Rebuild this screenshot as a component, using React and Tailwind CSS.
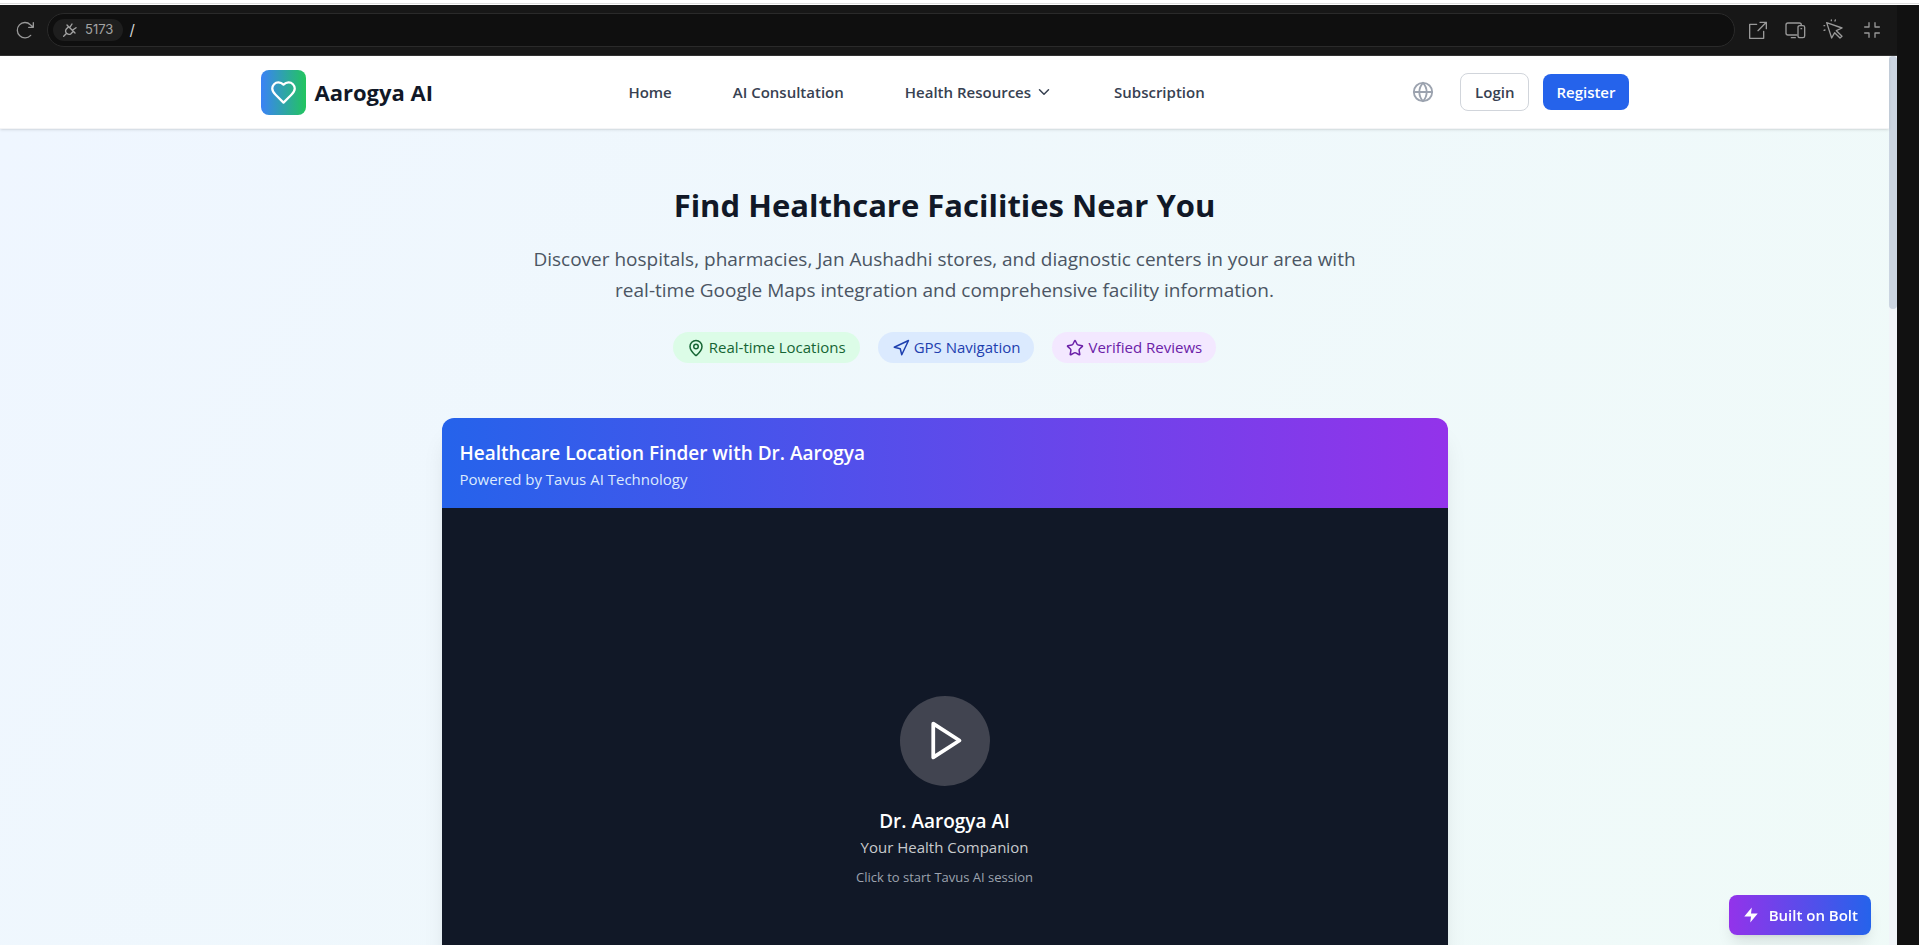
import { ChevronDown, Globe, MapPin, Navigation, Star } from 'lucide-react';

const badges = [
  { label: 'Real-time Locations', icon: MapPin, color: 'bg-[#dcfce7] text-[#166534]' },
  { label: 'GPS Navigation', icon: Navigation, color: 'bg-[#dbeafe] text-[#1e40af]' },
  { label: 'Verified Reviews', icon: Star, color: 'bg-[#f3e8ff] text-[#6b21a8]' },
];

function ToolbarButton({ label, children }) {
  return (
    <button type="button" aria-label={label} className="shrink-0 text-[#999999] hover:text-white">
      <svg
        viewBox="0 0 72 72"
        className="size-6"
        fill="none"
        stroke="currentColor"
        strokeWidth="4"
        strokeLinecap="round"
        strokeLinejoin="round"
      >
        {children}
      </svg>
    </button>
  );
}

function Toolbar() {
  return (
    <div className="flex h-[51px] shrink-0 items-center border-b border-[#333333] bg-[#171717] pr-[13px] pl-[13px]">
      <ToolbarButton label="Reload">
        <path d="M60 27L52 20A23 23 0 1 0 53 52M61 14V28H47" />
      </ToolbarButton>
      <div className="ml-[10px] flex h-[34px] flex-1 items-center gap-[6px] rounded-full border border-[#2a2a2a] bg-[#0f0f0f] pl-[5px]">
        <button
          type="button"
          className="flex h-[22px] items-center gap-2 rounded-full bg-[#1e1e1e] px-[10px] font-[Inter,sans-serif] text-[13px] text-[#a3a3a3]"
        >
          <svg
            viewBox="0 0 42 42"
            className="size-[14px]"
            fill="none"
            stroke="currentColor"
            strokeWidth="4"
            strokeLinecap="round"
            strokeLinejoin="round"
          >
            <path d="M2 40L11 31M14 8L34 28M17 11L10 18Q5 24 11 31Q18 37 24 32L31 25M20 14L27 3M28 22L39 14M14 8L12 6M34 28L36 30" />
          </svg>
          5173
        </button>
        <input
          type="text"
          aria-label="Path"
          defaultValue="/"
          className="min-w-0 flex-1 bg-transparent font-[Inter,sans-serif] text-[15px] text-[#d4d4d4] outline-none"
        />
      </div>
      <div className="ml-[11px] flex gap-[14px]">
        <ToolbarButton label="Open in new tab">
          <path d="M32 19H11V61H53V40M36 38L61 13M42 13H61V32" />
        </ToolbarButton>
        <ToolbarButton label="Device preview">
          <path d="M38 51H12Q6 51 6 45V21Q6 15 12 15H46Q52 15 52 21M22 59H34M48 23H57Q62 23 62 28V54Q62 59 57 59H48Q42 59 42 54V28Q42 23 48 23ZM51 32H53" />
        </ToolbarButton>
        <ToolbarButton label="Select element">
          <path d="M14 14L60 30L43 38L60 55L54 60L38 44L29 60ZM28 6V8M40 6L39 9M6 23H8M6 37L9 36" />
        </ToolbarButton>
        <ToolbarButton label="Exit full screen">
          <path d="M27 14V27H14M45 14V27H58M27 58V45H14M45 58V45H58" />
        </ToolbarButton>
      </div>
    </div>
  );
}

function Header() {
  return (
    <header className="relative h-[73px] shrink-0 border-b border-[#f3f4f6] bg-white shadow-sm">
      <div className="mx-auto flex h-full max-w-[1440px] items-center justify-between px-9">
        <a href="#home" className="flex items-center gap-[9px]">
          <span className="flex size-[45px] items-center justify-center rounded-lg bg-linear-to-r/srgb from-[#3b82f6] to-[#22c55e]">
            <svg
              viewBox="0 0 24 24"
              className="size-[27px] text-white"
              fill="none"
              stroke="currentColor"
              strokeWidth="2"
              strokeLinecap="round"
              strokeLinejoin="round"
            >
              <path d="M19 14c1.49-1.46 3-3.21 3-5.5A5.5 5.5 0 0 0 16.5 3c-1.76 0-3 .5-4.5 2-1.5-1.5-2.74-2-4.5-2A5.5 5.5 0 0 0 2 8.5c0 2.3 1.5 4.05 3 5.5l7 7Z" />
            </svg>
          </span>
          <span className="text-[22px] font-bold text-[#111827]">Aarogya AI</span>
        </a>

        <nav className="flex items-center gap-[61px] text-[15px] font-semibold text-[#374151]">
          <a href="#home">Home</a>
          <a href="#consultation">AI Consultation</a>
          <button type="button" className="flex items-center gap-1">
            Health Resources
            <ChevronDown className="size-[18px]" />
          </button>
          <a href="#subscription">Subscription</a>
        </nav>

        <div className="flex items-center gap-[14px] text-[15px] font-semibold">
          <button type="button" aria-label="Language" className="px-3 text-[#9ca3af]">
            <Globe className="size-[22px]" />
          </button>
          <button type="button" className="h-[38px] rounded-lg border border-[#d1d5db] px-[14px] text-[#374151]">
            Login
          </button>
          <button type="button" className="h-9 rounded-lg bg-[#2563eb] px-[13px] text-white">
            Register
          </button>
        </div>
      </div>
    </header>
  );
}

function Hero() {
  return (
    <section className="flex flex-col items-center text-center">
      <h1 className="text-[31px] leading-[40px] font-bold text-[#111827]">Find Healthcare Facilities Near You</h1>
      <p className="mt-[19px] max-w-[864px] text-[19px] leading-[31px] text-[#4b5563]">
        Discover hospitals, pharmacies, Jan Aushadhi stores, and diagnostic centers in your area with real-time Google
        Maps integration and comprehensive facility information.
      </p>
      <ul className="mt-[26px] flex gap-[18px]">
        {badges.map(({ label, icon: Icon, color }) => (
          <li key={label} className={`flex h-[31px] items-center gap-1 rounded-full px-[14px] text-[15px] ${color}`}>
            <Icon className="size-[18px]" />
            {label}
          </li>
        ))}
      </ul>
    </section>
  );
}

function VideoCard() {
  return (
    <section className="mx-auto mt-[55px] max-w-[1006px] overflow-hidden rounded-xl bg-white shadow-xl">
      <div className="h-[90px] bg-linear-to-r/srgb from-[#2563eb] to-[#9333ea] px-[18px] pt-[21px] text-white">
        <h2 className="text-[19px] leading-[28px] font-semibold">Healthcare Location Finder with Dr. Aarogya</h2>
        <p className="text-[15px] leading-[24px] text-[#dbeafe]">Powered by Tavus AI Technology</p>
      </div>
      <div className="flex aspect-video flex-col items-center justify-center bg-[#111827] text-white">
        <button
          type="button"
          aria-label="Start session"
          className="flex size-[90px] items-center justify-center rounded-full bg-[#414450]"
        >
          <svg
            viewBox="0 0 24 24"
            className="size-[45px]"
            fill="none"
            stroke="currentColor"
            strokeWidth="2"
            strokeLinecap="round"
            strokeLinejoin="round"
          >
            <path d="M6 3L20 12L6 21Z" />
          </svg>
        </button>
        <h3 className="mt-5 text-[19px] leading-[30px] font-semibold">Dr. Aarogya AI</h3>
        <p className="text-[15px] leading-[22px] text-[#c8cacd]">Your Health Companion</p>
        <p className="mt-[10px] text-[13px] leading-[18px] text-[#9ca3af]">Click to start Tavus AI session</p>
      </div>
    </section>
  );
}

export default function App() {
  return (
    <div className="flex h-screen flex-col overflow-hidden bg-white font-['Open_Sans',sans-serif]">
      <div className="mt-[3px] mb-px h-px shrink-0 bg-[#dedede]" />
      <div className="flex min-h-0 flex-1 bg-[#111111]">
        <div className="flex min-w-0 flex-1 flex-col">
          <Toolbar />
          <div className="flex min-h-0 flex-1">
            <div className="flex min-w-0 flex-1 flex-col bg-white">
              <Header />
              <main className="min-h-0 flex-1 overflow-hidden bg-linear-to-br/srgb from-[#eff6ff] to-[#f0fdf4] bg-[length:100%_3052px] bg-no-repeat pt-[56px]">
                <Hero />
                <VideoCard />
              </main>
            </div>
            <div className="w-2 shrink-0 bg-[#f1f5f9]">
              <div className="h-[253px] rounded bg-[#cbd5e1]" />
            </div>
          </div>
        </div>
        <div className="w-[22px] shrink-0" />
      </div>
      <a
        href="#bolt"
        className="fixed right-12 bottom-[10px] flex h-10 items-center gap-[9px] rounded-lg bg-linear-to-r/srgb from-[#9333ea] to-[#2563eb] px-[13px] text-[15px] font-semibold text-white shadow-lg"
      >
        <svg viewBox="0 0 24 24" className="size-[18px]" fill="currentColor">
          <path d="M13 2L3 14H12L11 22L21 10H12L13 2Z" />
        </svg>
        Built on Bolt
      </a>
    </div>
  );
}
